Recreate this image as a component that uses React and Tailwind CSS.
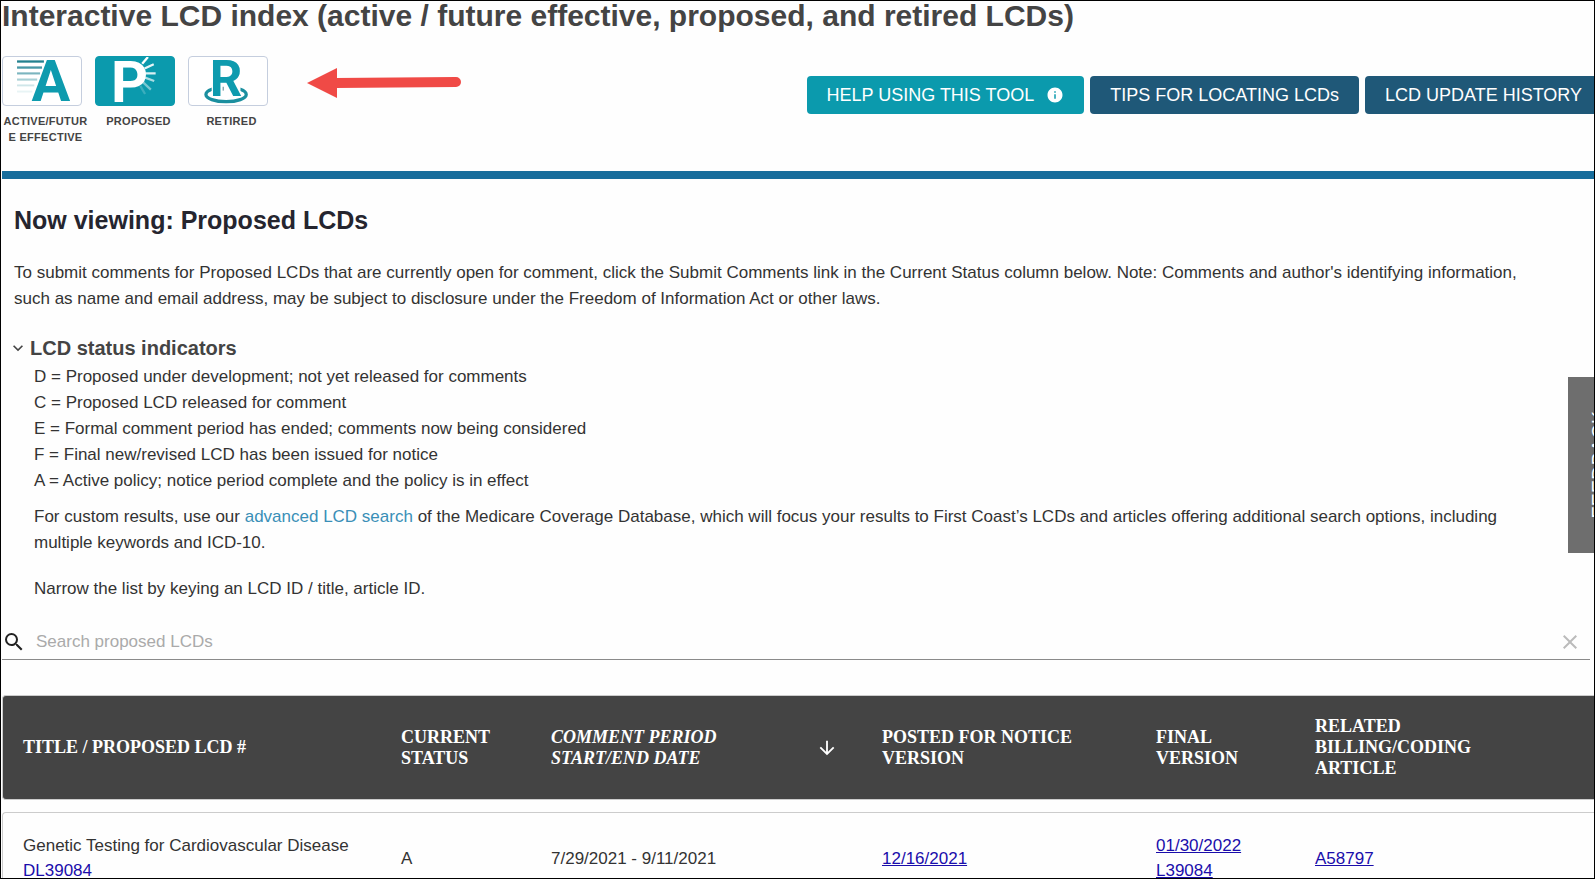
import React, { useState } from "react";
import { MdSearch, MdClose, MdArrowDownward, MdInfo, MdExpandMore } from "react-icons/md";

const ActiveIcon = () => (
  <svg viewBox="0 0 80 50" className="w-full h-full" aria-hidden="true">
    <rect x="14" y="3.5" width="28" height="2.4" fill="#23818f" />
    <rect x="14" y="9.8" width="26" height="2.4" fill="#4798a6" />
    <rect x="14" y="16" width="24" height="2.2" fill="#7bb5bf" />
    <rect x="14" y="22.4" width="21" height="2.2" fill="#a9d0d6" />
    <rect x="14" y="28.6" width="18" height="2" fill="#cfe6e9" />
    <rect x="14" y="35" width="16" height="2" fill="#e8f4f5" />
    <text x="29" y="46" fontSize="60" fill="#0e9bae" className="font-['Roboto',sans-serif] font-bold">A</text>
  </svg>
);

const ProposedIcon = () => (
  <svg viewBox="0 0 80 50" className="w-full h-full" aria-hidden="true">
    <text x="15" y="47" fontSize="60" fill="#fff" className="font-['Roboto',sans-serif] font-bold">P</text>
    <g stroke="#fff" strokeWidth="2.4">
      <path d="M47.5 7 L53.5 0" />
      <path d="M50 12 L59.5 7.5" strokeOpacity="0.9" />
      <path d="M50.5 17 H61.5" strokeOpacity="0.85" />
      <path d="M50.5 21.5 L60 25" strokeOpacity="0.65" />
      <path d="M48.5 26.5 L56.5 34" strokeOpacity="0.45" />
      <path d="M45.5 30 L50.5 38.5" strokeOpacity="0.2" />
    </g>
  </svg>
);

const RetiredIcon = () => (
  <svg viewBox="0 0 80 50" className="w-full h-full" aria-hidden="true">
    <ellipse cx="38" cy="39" rx="21" ry="7.6" fill="none" stroke="#1b8f9f" strokeWidth="3.4" />
    <path d="M23 28 H53 V42 H23 Z" fill="#fff" />
    <text x="21" y="41" fontSize="53" fill="#0e9bae" className="font-['Roboto',sans-serif] font-bold">R</text>
    <path d="M35 31 V35" stroke="#4a7f87" strokeWidth="1" />
  </svg>
);

const indexes = [
  { id: "active", label: "ACTIVE/FUTURE EFFECTIVE", Icon: ActiveIcon },
  { id: "proposed", label: "PROPOSED", Icon: ProposedIcon },
  { id: "retired", label: "RETIRED", Icon: RetiredIcon },
];

const statuses = [
  "D = Proposed under development; not yet released for comments",
  "C = Proposed LCD released for comment",
  "E = Formal comment period has ended; comments now being considered",
  "F = Final new/revised LCD has been issued for notice",
  "A = Active policy; notice period complete and the policy is in effect",
];

const rows = [
  {
    title: "Genetic Testing for Cardiovascular Disease",
    proposedId: "DL39084",
    status: "A",
    period: "7/29/2021 - 9/11/2021",
    notice: "12/16/2021",
    finalDate: "01/30/2022",
    finalId: "L39084",
    article: "A58797",
  },
];

const ToolButton = ({ children, color = "bg-[#1f5878]" }) => (
  <button className={`${color} flex items-center gap-3 h-[38px] px-5 rounded text-lg text-white whitespace-nowrap`}>
    {children}
  </button>
);

const HeadCell = ({ children, className = "" }) => (
  <th className={`bg-[#444] border-y border-[#ccc] px-5 text-left align-middle font-bold ${className}`}>
    {children}
  </th>
);

const Cell = ({ children, className = "" }) => (
  <td className={`border-y border-[#ccc] px-5 py-5 align-middle ${className}`}>{children}</td>
);

const TableLink = ({ children, className = "underline" }) => (
  <a href="#" className={`text-[#1a0dab] ${className}`}>{children}</a>
);

export default function App() {
  const [selected, setSelected] = useState("proposed");
  const [open, setOpen] = useState(true);
  const [query, setQuery] = useState("");

  return (
    <div className="relative h-screen overflow-hidden border border-black bg-[#fefefe] font-['Liberation_Sans',Arial,sans-serif] text-[17px] leading-[26px] text-[#333]">
      <div className="pl-px">
        <h1 className="text-3xl leading-[30px] font-bold text-[#444]">
          Interactive LCD index (active / future effective, proposed, and retired LCDs)
        </h1>

        <div className="flex items-start justify-between pt-[25px] pb-[26px]">
          <div className="flex items-start">
            {indexes.map(({ id, label, Icon }) => (
              <button key={id} onClick={() => setSelected(id)} className="flex flex-col w-[93px]">
                <span
                  className={`block w-20 h-[50px] rounded border overflow-hidden ${
                    selected === id ? "bg-[#0b9aad] border-[#0b9aad]" : "bg-white border-[#c5cede]"
                  }`}
                >
                  <Icon />
                </span>
                <span className="mt-[7px] px-px w-[87px] text-[11px] leading-4 font-bold tracking-wide text-center break-all text-[#444]">
                  {label}
                </span>
              </button>
            ))}
            <svg viewBox="0 0 156 32" className="w-[156px] h-8 ml-[26px] mt-[11px]" aria-hidden="true">
              <path d="M28 16 L149 15" stroke="#f04a46" strokeWidth="10" strokeLinecap="round" />
              <path d="M0 16 L30 1 V31 Z" fill="#f04a46" />
            </svg>
          </div>

          <div className="flex gap-1.5 mt-5 -mr-2">
            <ToolButton color="bg-[#0b9aad]">
              HELP USING THIS TOOL <MdInfo className="w-[18px] h-[18px]" />
            </ToolButton>
            <ToolButton>TIPS FOR LOCATING LCDs</ToolButton>
            <ToolButton>LCD UPDATE HISTORY</ToolButton>
          </div>
        </div>

        <div className="h-2 bg-[#176d9c]" />

        <div className="pl-3 pr-12">
          <h2 className="mt-[27px] text-[25px] leading-7 font-bold text-[#25252f]">Now viewing: Proposed LCDs</h2>
          <p className="mt-[26px]">
            To submit comments for Proposed LCDs that are currently open for comment, click the Submit Comments link in
            the Current Status column below. Note: Comments and author's identifying information, such as name and email
            address, may be subject to disclosure under the Freedom of Information Act or other laws.
          </p>
        </div>

        <div className="mt-[23px] pl-1.5 pr-12">
          <h3 className="text-xl leading-[26px] font-bold text-[#444]">
            <button onClick={() => setOpen(!open)} className="flex items-center gap-0.5" aria-expanded={open}>
              <MdExpandMore className="w-5 h-5" />
              LCD status indicators
            </button>
          </h3>
          {open && (
            <ul className="mt-[3px] pl-[26px]">
              {statuses.map((s) => (
                <li key={s}>{s}</li>
              ))}
            </ul>
          )}
          <p className="mt-2.5 pl-[26px]">
            For custom results, use our <a href="#" className="text-[#3a8fb7]">advanced LCD search</a> of the Medicare
            Coverage Database, which will focus your results to First Coast’s LCDs and articles offering additional
            search options, including multiple keywords and ICD-10.
          </p>
          <p className="mt-5 pl-[26px]">Narrow the list by keying an LCD ID / title, article ID.</p>
        </div>

        <div className="flex items-center mt-[22px] mr-1 h-9 border-b border-[#8a8a8a]">
          <MdSearch className="w-6 h-6 text-[#222]" />
          <input
            type="text"
            aria-label="Search proposed LCDs"
            placeholder="Search proposed LCDs"
            value={query}
            onChange={(e) => setQuery(e.target.value)}
            className="flex-1 ml-2.5 outline-none placeholder:text-[#aaa]"
          />
          <button aria-label="Clear search" onClick={() => setQuery("")} className="mr-2">
            <MdClose className="w-6 h-6 text-[#bbb]" />
          </button>
        </div>

        <div className="mt-[23px]">
          <table className="w-full table-fixed border-separate border-spacing-x-0 border-spacing-y-3">
            <colgroup>
              <col className="w-[379px]" />
              <col className="w-[150px]" />
              <col className="w-[331px]" />
              <col className="w-[274px]" />
              <col className="w-[159px]" />
              <col />
            </colgroup>
            <thead>
              <tr className="h-[105px] font-['Liberation_Serif',serif] text-lg leading-[21px] text-white">
                <HeadCell className="border-l rounded-l">TITLE / PROPOSED LCD #</HeadCell>
                <HeadCell>CURRENT STATUS</HeadCell>
                <HeadCell>
                  <div className="flex items-center justify-between pr-1">
                    <em>
                      COMMENT PERIOD
                      <br />
                      START/END DATE
                    </em>
                    <MdArrowDownward className="w-[22px] h-[22px]" />
                  </div>
                </HeadCell>
                <HeadCell>POSTED FOR NOTICE VERSION</HeadCell>
                <HeadCell>FINAL VERSION</HeadCell>
                <HeadCell>
                  RELATED
                  <br />
                  BILLING/CODING
                  <br />
                  ARTICLE
                </HeadCell>
              </tr>
            </thead>
            <tbody className="leading-[25px]">
              {rows.map((row) => (
                <tr key={row.proposedId}>
                  <Cell className="border-l rounded-l">
                    {row.title}
                    <br />
                    <TableLink className="no-underline">{row.proposedId}</TableLink>
                  </Cell>
                  <Cell>{row.status}</Cell>
                  <Cell>{row.period}</Cell>
                  <Cell><TableLink>{row.notice}</TableLink></Cell>
                  <Cell>
                    <TableLink>{row.finalDate}</TableLink>
                    <br />
                    <TableLink>{row.finalId}</TableLink>
                  </Cell>
                  <Cell><TableLink>{row.article}</TableLink></Cell>
                </tr>
              ))}
            </tbody>
          </table>
        </div>
      </div>

      <button className="absolute top-[376px] -right-4 flex items-center w-[42px] h-44 pl-[18px] bg-[#6e6e6e] text-xl leading-[26px] text-white">
        <span className="shrink-0 [writing-mode:vertical-rl] rotate-180">FEEDBACK</span>
      </button>
    </div>
  );
}
